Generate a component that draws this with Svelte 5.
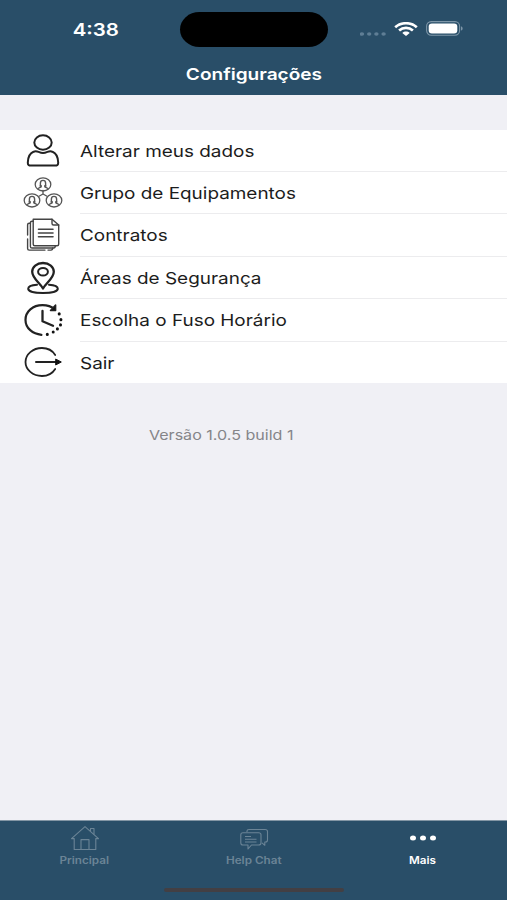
<script>
    let items = [
        { id: 'user', label: 'Alterar meus dados' },
        { id: 'group', label: 'Grupo de Equipamentos' },
        { id: 'contracts', label: 'Contratos' },
        { id: 'areas', label: 'Áreas de Segurança' },
        { id: 'timezone', label: 'Escolha o Fuso Horário' },
        { id: 'exit', label: 'Sair' }
    ];

    let tabs = [
        { id: 'home', label: 'Principal' },
        { id: 'chat', label: 'Help Chat' },
        { id: 'more', label: 'Mais' }
    ];

    let activeTab = 'more';

    // people in the equipment group icon
    const people = [[21, 8], [10, 24], [32, 24]];
</script>

<svelte:head>
    <title>Configurações</title>
</svelte:head>

<div class="screen">
    <header>
        <div class="status-bar">
            <div class="time"><span class="wide">4:38</span></div>
            <div class="island"></div>
            <div class="indicators">
                <svg class="cell" width="26" height="4" viewBox="0 0 26 4" fill="#5f7e95">
                    {#each [2, 9.2, 16.4, 23.6] as x}
                        <ellipse cx={x} cy="2" rx="2.2" ry="1.8" />
                    {/each}
                </svg>
                <svg class="wifi" width="24" height="14" viewBox="0 0 24 14" fill="none" stroke="#fff" stroke-width="2.7">
                    <path d="M1.2 5.3C7.2 -.1 16.8 -.1 22.8 5.3" />
                    <path d="M5.1 8.6C9.1 5 14.9 5 18.9 8.6" />
                    <path d="M8.3 10.9C10.3 9 13.7 9 15.7 10.9L12 14Z" fill="#fff" stroke="none" />
                </svg>
                <svg class="battery" width="37" height="15" viewBox="0 0 37 15">
                    <rect x=".6" y=".6" width="33" height="13.6" rx="4.6" fill="none" stroke="#7d96a8" stroke-width="1.1" />
                    <rect x="2.7" y="2.4" width="28.6" height="10" rx="3.2" fill="#fff" />
                    <path d="M35 5.2C37.2 6 37.2 8.8 35 9.6Z" fill="#7d96a8" />
                </svg>
            </div>
        </div>
        <h1><span class="wide">Configurações</span></h1>
    </header>

    <main>
        <ul>
            {#each items as item}
                <li>
                    <div class="icon">
                        <svg width="42" height="36" viewBox="0 0 42 36" fill="none" stroke="#222" stroke-width="2" stroke-linecap="round" stroke-linejoin="round">
                            {#if item.id === 'user'}
                                <ellipse cx="21" cy="9.5" rx="8.7" ry="7.2" />
                                <path d="M11.5 18.8C15 16.7 16.6 20 21 20S27 16.7 30.5 18.8C34.7 20.5 36 24.5 36.2 29.5C36.3 31.9 35.2 32.5 33 32.5H9C6.8 32.5 5.7 31.9 5.8 29.5C6 24.5 7.3 20.5 11.5 18.8Z" />
                            {:else if item.id === 'group'}
                                <g stroke="#555" stroke-width="1.3">
                                    <path d="M21 15.5V19L17 21.3M21 19L25 21.3" />
                                    {#each people as [x, y]}
                                        <g transform="translate({x} {y + 1.4})">
                                            <ellipse rx="7.8" ry="6.6" />
                                            <path d="M-2.6 1V-1.3C-2.6 -5 2.6 -5 2.6 -1.3V1M-1.8 1.2V2.4L-5 4.1M1.8 1.2V2.4L5 4.1M-3 1.5H-2M2 1.5H3" stroke-width="1.4" />
                                        </g>
                                    {/each}
                                </g>
                            {:else if item.id === 'contracts'}
                                <g stroke="#444" stroke-width="1.4">
                                    <path d="M11.2 2.2H30L36.7 8V27.3Q36.7 28.8 35 28.8H12.8Q11.2 28.8 11.2 27.3Z" />
                                    <path d="M30 2.2V6.5Q30 8 31.6 8H36.7" />
                                    <path d="M11.2 4.2H10Q8.4 4.2 8.4 5.8V29.4Q8.4 31 10 31H31.5Q33.3 31 33.3 28.8" />
                                    <path d="M8.4 6.2H7.2Q5.6 6.2 5.6 7.8V18M5.6 22V31.5Q5.6 33.1 7.2 33.1H23M26 33.1H29Q30.7 33.1 30.7 31" />
                                    <path d="M16.5 12.2H31M16.5 16H31M16.5 19.8H31" stroke-width="1.6" />
                                </g>
                            {:else if item.id === 'areas'}
                                <path d="M15 24.7C9 25.1 6.2 27 6.2 28.8C6.2 31.4 12.5 33 21 33S35.8 31.4 35.8 28.8C35.8 27 33 25.1 27 24.7" />
                                <path d="M21 28.5C18 23.2 10.2 18.2 10.2 11.8C10.2 6.8 14.7 3 21 3S31.8 6.8 31.8 11.8C31.8 18.2 24 23.2 21 28.5Z" stroke-width="2.3" />
                                <ellipse cx="21" cy="11.8" rx="4.9" ry="3.8" />
                            {:else if item.id === 'timezone'}
                                <path d="M19.4 32.8C10.8 32 3.5 26.2 3.5 17.9C3.5 9.5 10.8 3.2 20.5 3.2C25.5 3.2 29.5 4.6 33 7.4" stroke-width="2.2" />
                                <path d="M33.6 3V8.6H28.5Z" fill="#111" stroke-width="1.5" />
                                <path d="M20.5 9V19.2L31 23.8" stroke-width="2.3" />
                                <path d="M37.2 11.8V12M38.9 17.6V17.8M38.5 22.7V22.9M35.4 26.7V26.9M31.2 29.9V30.1M25.3 32.3V32.5" stroke="#111" stroke-width="3" />
                            {:else}
                                <path d="M33.2 11C30.5 6.6 25.6 4 20 4C10.9 4 3.5 10.2 3.5 18S10.9 32 20 32C25.6 32 30.5 29.4 33.2 25" stroke-width="1.8" />
                                <path d="M14 18H35" />
                                <path d="M34 15.2L39.3 18L34 20.8Z" fill="#111" stroke="#111" stroke-width="1" />
                            {/if}
                        </svg>
                    </div>
                    <div class="label"><span class="wide">{item.label}</span></div>
                </li>
            {/each}
        </ul>
        <p class="version"><span class="wide">Versão 1.0.5 build 1</span></p>
    </main>

    <nav>
        <div class="tabs">
            {#each tabs as tab}
                <button class:active={activeTab === tab.id} on:click={() => (activeTab = tab.id)}>
                    <svg width="30" height="26" viewBox="0 0 30 26" fill="none" stroke="currentColor" stroke-width="1.1" stroke-linejoin="round">
                        {#if tab.id === 'home'}
                            <path d="M1.5 13.6L15 1.6L28.5 13.6H25.8V24.5H4.2V13.6Z" />
                            <path d="M11 24.5V14.6H19V24.5M20.5 6V3.5H24V9.4" />
                        {:else if tab.id === 'chat'}
                            <path d="M8 7V6Q8 4.5 10 4.5H26Q28.5 4.5 28.5 6.5V15Q28.5 17 26.5 17H25.8V20.3L23 17.8" />
                            <path d="M4 7.8H19.5Q22 7.8 22 9.8V18Q22 20 19.5 20H12.5L9 24V20H4Q1.8 20 1.8 18V9.8Q1.8 7.8 4 7.8Z" />
                            <path d="M6 11.5H12M6 14.3H17.5M6 17H17.5" />
                        {:else}
                            <g fill="currentColor" stroke="none">
                                <ellipse cx="5" cy="13" rx="3" ry="2.5" />
                                <ellipse cx="15" cy="13" rx="3" ry="2.5" />
                                <ellipse cx="25" cy="13" rx="3" ry="2.5" />
                            </g>
                        {/if}
                    </svg>
                    <span class="wide">{tab.label}</span>
                </button>
            {/each}
        </div>
        <div class="home-indicator"></div>
    </nav>
</div>

<style>
    :global(body) {
        margin: 0;
    }

    .screen {
        display: flex;
        flex-direction: column;
        height: 900px;
        background: #f0f0f5;
        font-family: Inter, "Liberation Sans", sans-serif;
        overflow: hidden;
    }

    .wide {
        display: inline-block;
        transform: scaleX(1.17);
        white-space: nowrap;
    }

    header {
        height: 95px;
        background: #294e68;
        color: #fff;
    }

    .status-bar {
        display: grid;
        grid-template-columns: 180px 148px 1fr;
        align-items: center;
        height: 59px;
    }

    .time {
        padding-left: 12px;
        font-size: 17.5px;
        font-weight: 600;
        text-align: center;
    }

    .island {
        height: 35px;
        border-radius: 20px / 18px;
        background: #000;
    }

    .indicators {
        display: flex;
        align-items: center;
        padding-left: 32px;
        gap: 8px;
    }

    .cell {
        margin-top: 8px;
    }

    .wifi,
    .battery {
        margin-bottom: 2px;
    }

    h1 {
        margin: 0;
        font-size: 16.5px;
        font-weight: 600;
        line-height: 30px;
        text-align: center;
    }

    h1 .wide {
        transform: scaleX(1.155);
    }

    main {
        flex: 1;
    }

    ul {
        list-style: none;
        margin: 35px 0 0;
        padding: 0;
        background: #fff;
    }

    li {
        display: flex;
        align-items: center;
        height: 42.5px;
    }

    li:first-child {
        height: 41.5px;
    }

    li:last-child {
        height: 41px;
    }

    .icon {
        width: 80px;
        padding-left: 22px;
        box-sizing: border-box;
        display: flex;
    }

    .label {
        flex: 1;
        display: flex;
        align-items: center;
        align-self: stretch;
        padding-top: 1px;
        border-bottom: 1px solid #ececee;
        color: #1c1c1c;
        font-size: 16.5px;
    }

    .label .wide {
        transform: scaleX(1.147);
        transform-origin: left;
    }

    li:last-child .label {
        border-bottom: none;
    }

    .version {
        margin: 43px 65px 0 0;
        color: #858589;
        font-size: 13.4px;
        line-height: 19px;
        text-align: center;
    }

    .version .wide {
        transform: scaleX(1.2);
    }

    nav {
        height: 80px;
        background: #294e68;
        border-top: 1px solid #8396a5;
        display: flex;
        flex-direction: column;
        box-sizing: border-box;
    }

    .tabs {
        display: flex;
        flex: 1;
        padding-top: 4px;
    }

    button {
        flex: 1;
        display: flex;
        flex-direction: column;
        align-items: center;
        padding: 0;
        border: none;
        background: none;
        color: #6b8496;
        font: 600 10px/18px Inter, "Liberation Sans", sans-serif;
    }

    button.active {
        color: #fff;
    }

    .home-indicator {
        width: 180px;
        height: 4px;
        margin: 0 auto 8px;
        border-radius: 2px;
        background: #433f43;
    }
</style>
